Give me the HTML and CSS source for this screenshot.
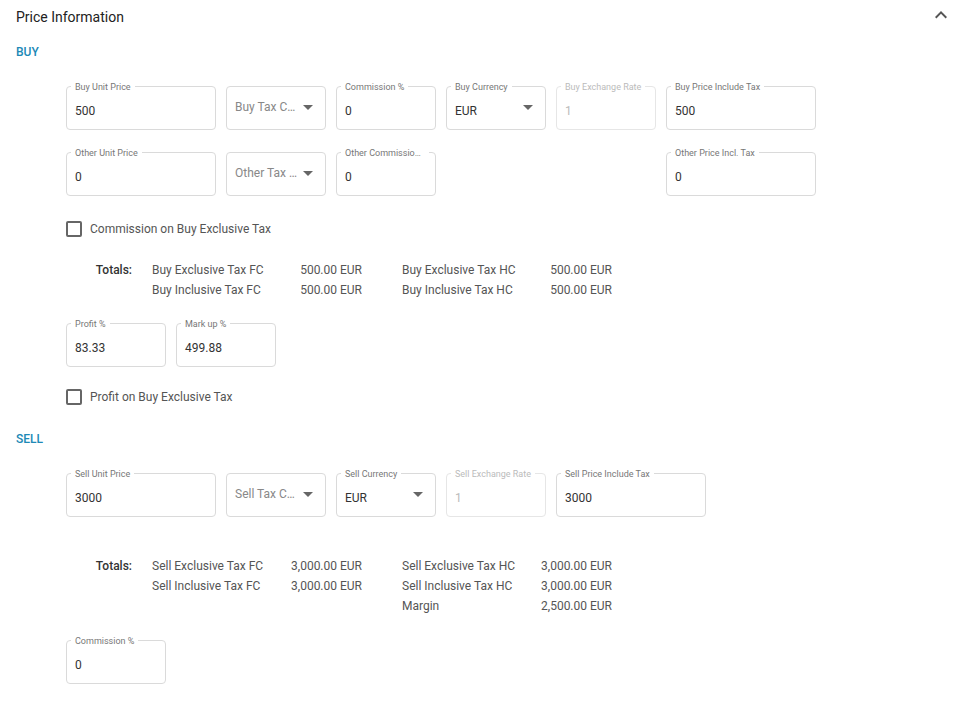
FILE: index.html
```html
<!DOCTYPE html>
<html lang="en">
<head>
    <meta charset="UTF-8">
    <meta name="viewport" content="width=device-width, initial-scale=1.0">
    <title>Price Information</title>
    <link rel="stylesheet" href="styles.css">
</head>
<body>
    <div class="panel">
        <div class="panel-header">
            <h2>Price Information</h2>
            <svg class="chevron" width="24" height="24" viewBox="0 0 24 24"><path d="M7.41 15.41L12 10.83l4.59 4.58L18 14l-6-6-6 6z"/></svg>
        </div>

        <div class="group-title">BUY</div>
        <div class="group-body">
            <div class="field-row">
                <div class="field wide"><label>Buy Unit Price</label><span class="value">500</span></div>
                <div class="field select"><span class="placeholder">Buy Tax Code</span><i class="arrow"></i></div>
                <div class="field"><label>Commission %</label><span class="value">0</span></div>
                <div class="field select"><label>Buy Currency</label><span class="value">EUR</span><i class="arrow"></i></div>
                <div class="field disabled"><label>Buy Exchange Rate</label><span class="value">1</span></div>
                <div class="field wide"><label>Buy Price Include Tax</label><span class="value">500</span></div>
            </div>

            <div class="field-row row-gap">
                <div class="field wide"><label>Other Unit Price</label><span class="value">0</span></div>
                <div class="field select"><span class="placeholder">Other Tax Code</span><i class="arrow"></i></div>
                <div class="field"><label>Other Commission Percent</label><span class="value">0</span></div>
                <div class="spacer"></div>
                <div class="field wide"><label>Other Price Incl. Tax</label><span class="value">0</span></div>
            </div>

            <label class="check check-first"><span class="box"></span>Commission on Buy Exclusive Tax</label>

            <div class="totals">
                <div class="totals-label">Totals:</div>
                <div>Buy Exclusive Tax FC</div><div class="num">500.00 EUR</div>
                <div class="hc">Buy Exclusive Tax HC</div><div class="num">500.00 EUR</div>
                <div></div>
                <div>Buy Inclusive Tax FC</div><div class="num">500.00 EUR</div>
                <div class="hc">Buy Inclusive Tax HC</div><div class="num">500.00 EUR</div>
            </div>

            <div class="field-row profit-row">
                <div class="field"><label>Profit %</label><span class="value">83.33</span></div>
                <div class="field"><label>Mark up %</label><span class="value">499.88</span></div>
            </div>

            <label class="check check-second"><span class="box"></span>Profit on Buy Exclusive Tax</label>
        </div>

        <div class="group-title sell-title">SELL</div>
        <div class="group-body">
            <div class="field-row">
                <div class="field wide"><label>Sell Unit Price</label><span class="value">3000</span></div>
                <div class="field select"><span class="placeholder">Sell Tax Code</span><i class="arrow"></i></div>
                <div class="field select"><label>Sell Currency</label><span class="value">EUR</span><i class="arrow"></i></div>
                <div class="field disabled"><label>Sell Exchange Rate</label><span class="value">1</span></div>
                <div class="field wide"><label>Sell Price Include Tax</label><span class="value">3000</span></div>
            </div>

            <div class="totals sell-totals">
                <div class="totals-label">Totals:</div>
                <div>Sell Exclusive Tax FC</div><div class="num">3,000.00 EUR</div>
                <div class="hc">Sell Exclusive Tax HC</div><div class="num">3,000.00 EUR</div>
                <div></div>
                <div>Sell Inclusive Tax FC</div><div class="num">3,000.00 EUR</div>
                <div class="hc">Sell Inclusive Tax HC</div><div class="num">3,000.00 EUR</div>
                <div></div>
                <div></div><div></div>
                <div class="hc">Margin</div><div class="num">2,500.00 EUR</div>
            </div>

            <div class="field-row commission-row">
                <div class="field"><label>Commission %</label><span class="value">0</span></div>
            </div>
        </div>
    </div>
</body>
</html>
```

FILE: styles.css
```css
body {
    margin: 0;
    padding: 0;
    background-color: #fff;
    font-family: Roboto, "Liberation Sans", Arial, sans-serif;
    color: #333;
}

.panel {
    width: 960px;
}

.panel-header {
    height: 34px;
    display: flex;
    align-items: center;
    justify-content: space-between;
    padding: 0 7px 0 16px;
}

.panel-header h2 {
    margin: 0;
    font-size: 14px;
    font-weight: 400;
    color: #222;
}

.chevron {
    fill: #555;
    margin-top: -5px;
}

.group-title {
    margin-top: 10px;
    padding-left: 16px;
    height: 16px;
    line-height: 16px;
    font-size: 12px;
    font-weight: 500;
    color: #2089b6;
}

.sell-title {
    margin-top: 26px;
}

.group-body {
    padding-left: 66px;
}

.field-row {
    display: flex;
    gap: 10px;
    margin-top: 26px;
}

.row-gap {
    margin-top: 22px;
}

.profit-row {
    margin-top: 23px;
}

.commission-row {
    margin-top: 24px;
}

.spacer {
    width: 210px;
}

.field {
    position: relative;
    box-sizing: border-box;
    width: 100px;
    height: 44px;
    border: 1px solid #dadada;
    border-radius: 4px;
    padding: 14px 8px 0 8px;
}

.field.wide {
    width: 150px;
}

.field label {
    position: absolute;
    top: -5px;
    left: 4px;
    max-width: 80px;
    padding: 0 4px;
    background: #fff;
    font-size: 9px;
    line-height: 11px;
    color: #777;
    white-space: nowrap;
    overflow: hidden;
    text-overflow: ellipsis;
}

.field.wide label {
    max-width: 130px;
}

.field .value {
    display: block;
    font-size: 12px;
    line-height: 20px;
    color: #333;
}

.field .placeholder {
    display: block;
    width: 63px;
    margin-top: -4px;
    font-size: 12px;
    line-height: 20px;
    color: #888;
    white-space: nowrap;
    overflow: hidden;
    text-overflow: ellipsis;
}

.field .arrow {
    position: absolute;
    right: 12px;
    top: 18px;
    width: 0;
    height: 0;
    border-left: 5px solid transparent;
    border-right: 5px solid transparent;
    border-top: 5px solid #666;
}

.field.disabled {
    border-color: #e6e6e6;
}

.field.disabled label,
.field.disabled .value {
    color: #bbb;
}

.check {
    display: flex;
    align-items: center;
    gap: 8px;
    height: 16px;
    font-size: 12px;
    color: #555;
}

.check-first {
    margin-top: 25px;
}

.check-second {
    margin-top: 22px;
}

.box {
    box-sizing: border-box;
    width: 16px;
    height: 16px;
    border: 2px solid #666;
    border-radius: 2px;
}

.totals {
    display: grid;
    grid-template-columns: 86px 130px 80px 170px 80px;
    margin-top: 23px;
    font-size: 12px;
    line-height: 20px;
    color: #555;
}

.totals-label {
    padding-right: 20px;
    text-align: right;
    font-weight: 500;
    color: #333;
}

.totals .hc {
    padding-left: 40px;
}

.totals .num {
    text-align: right;
}

.sell-totals {
    margin-top: 39px;
}
```
